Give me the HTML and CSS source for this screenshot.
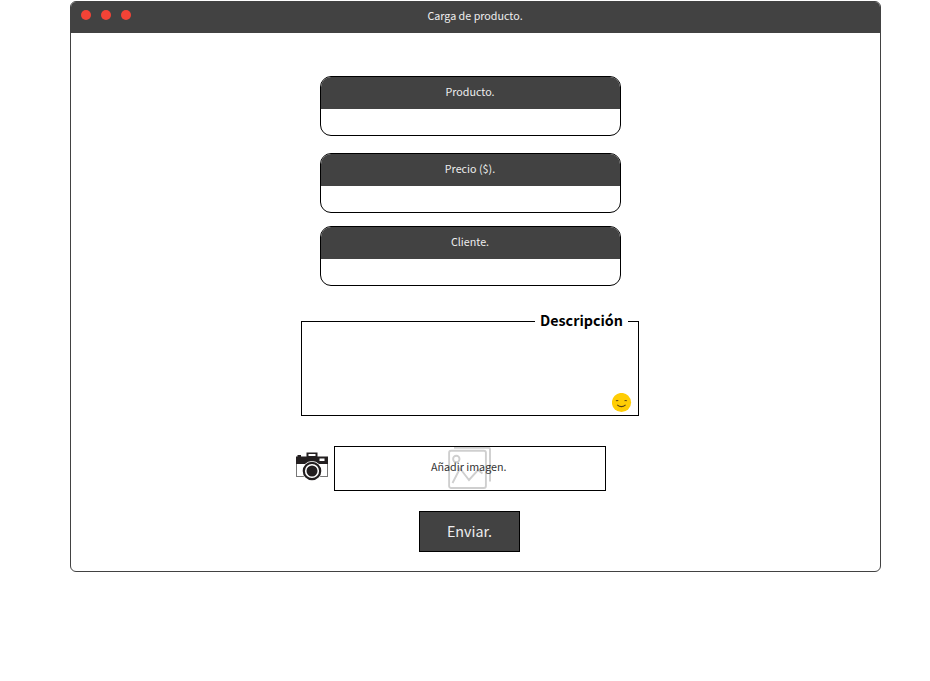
FILE: index.html
```html
<!DOCTYPE html>
<html lang="es">
<head>
<meta charset="utf-8">
<title>Carga de producto</title>
<link rel="stylesheet" href="styles.css">
</head>
<body>
<main class="window">
  <header class="titlebar">
    <div class="dots"><i class="dot"></i><i class="dot"></i><i class="dot"></i></div>
    <span class="title">Carga de producto.</span>
  </header>
  <form class="form">
    <section class="field"><div class="label">Producto.</div></section>
    <section class="field price"><div class="label">Precio ($).</div></section>
    <section class="field client"><div class="label">Cliente.</div></section>
    <section class="description">
      <h2 class="legend">Descripción</h2>
      <svg class="smile" width="20" height="20" viewBox="0 0 20 20">
        <circle cx="9.500" cy="9.500" r="9.600" fill="#ffcd05"/>
        <path d="M3.900 7.900q1.200-.9 2.400 0M12.500 7.900q1.200-.9 2.400 0M5.200 11.900q4.200 3.400 8.400 0" fill="none" stroke="#5a4218" stroke-width="1.100"/>
      </svg>
    </section>
    <div class="upload-row">
      <svg class="camera" width="32" height="30" viewBox="0 0 32 30">
        <rect x=".5" y="10" width="31" height="14.500" fill="#fff" stroke="#777"/>
        <path d="M0 4.500h1.500V3H5v1.500h5.500V.5h11v4H32V12H0z" fill="#231f20"/>
        <path d="M12.500 2h7v2h-7zM23.500 6.500h5v2.500h-5z" fill="#fff"/>
        <circle cx="16" cy="19" r="10" fill="#fff"/>
        <circle cx="16" cy="19" r="8.200" fill="#fff" stroke="#231f20" stroke-width="2.200"/>
        <circle cx="16" cy="19" r="5.500" fill="#231f20"/>
      </svg>
      <div class="upload">
        <svg class="picture" width="44" height="44" viewBox="0 0 44 44" fill="none" stroke="#cfcfcf" stroke-width="1.900">
          <rect x="1.100" y="3.800" width="36.800" height="37.200" rx="2"/>
          <path d="M6 .8h34.500q1.500 0 1.500 1.500V34.500"/>
          <circle cx="8.300" cy="12" r="3.200"/>
          <path d="M4.500 36 12 21.500l9 11.500 9-10 4.500 3.500"/>
        </svg>
        <span class="upload-text">Añadir imagen.</span>
      </div>
    </div>
    <button class="send" type="button">Enviar.</button>
  </form>
</main>
</body>
</html>
```
FILE: styles.css
```css
* { box-sizing: border-box; }
body {
  margin: 0;
  padding-top: 1px;
  background: #fff;
  font: 10.74px/18px "Noto Sans CJK JP", "Noto Sans", sans-serif;
}
.window {
  width: 811px;
  height: 571px;
  margin-left: 70px;
  border: 1px solid #424242;
  border-radius: 6px;
  overflow: hidden;
}
.titlebar {
  display: grid;
  grid-template-columns: 60px 1fr 60px;
  align-items: center;
  height: 31px;
  padding-bottom: 5px;
  background: #424242;
  color: #eee;
}
.dots { display: flex; gap: 10px; padding-left: 10.4px; }
.dot { flex: none; width: 10px; height: 10px; border-radius: 50%; background: #f44336; }
.title { padding: 1px 1px 0 0; text-align: center; }
.form { display: flex; flex-direction: column; align-items: center; padding: 43px 11px 0 0; }
.form > * { flex: none; }
.field {
  width: 301px;
  height: 60px;
  margin-left: 1px;
  border: 1px solid #000;
  border-radius: 11px;
  overflow: hidden;
}
.price { margin-top: 17px; }
.client { margin-top: 13px; }
.label { height: 32px; padding: 6px 1px 0 0; background: #424242; color: #eee; text-align: center; }
.description {
  display: flex;
  flex-direction: column;
  justify-content: space-between;
  align-items: flex-end;
  width: 338px;
  height: 95px;
  margin-top: 35px;
  border: 1px solid #000;
}
.legend {
  width: 93px;
  margin: -14px 10px 0 0;
  background: #fff;
  font-size: 14.3px;
  line-height: 24px;
  font-weight: 700;
  text-align: center;
}
.smile { margin: 0 6px 2px 0; }
.upload-row { display: flex; gap: 6px; width: 310px; margin: 30px 38px 0 0; }
.camera { margin-top: 6px; }
.upload { display: grid; place-items: center; width: 272px; height: 45px; border: 1px solid #000; }
.picture, .upload-text { grid-area: 1 / 1; }
.picture { margin-right: 1px; }
.upload-text { margin: -4px 2.500px 0 0; color: #333; }
.send {
  width: 101px;
  height: 41px;
  margin: 20px 1px 0 0;
  padding: 0 0 1px;
  border: 1px solid #000;
  background: #424242;
  color: #eee;
  font: 14.3px/24px "Noto Sans CJK JP", "Noto Sans", sans-serif;
}
```
